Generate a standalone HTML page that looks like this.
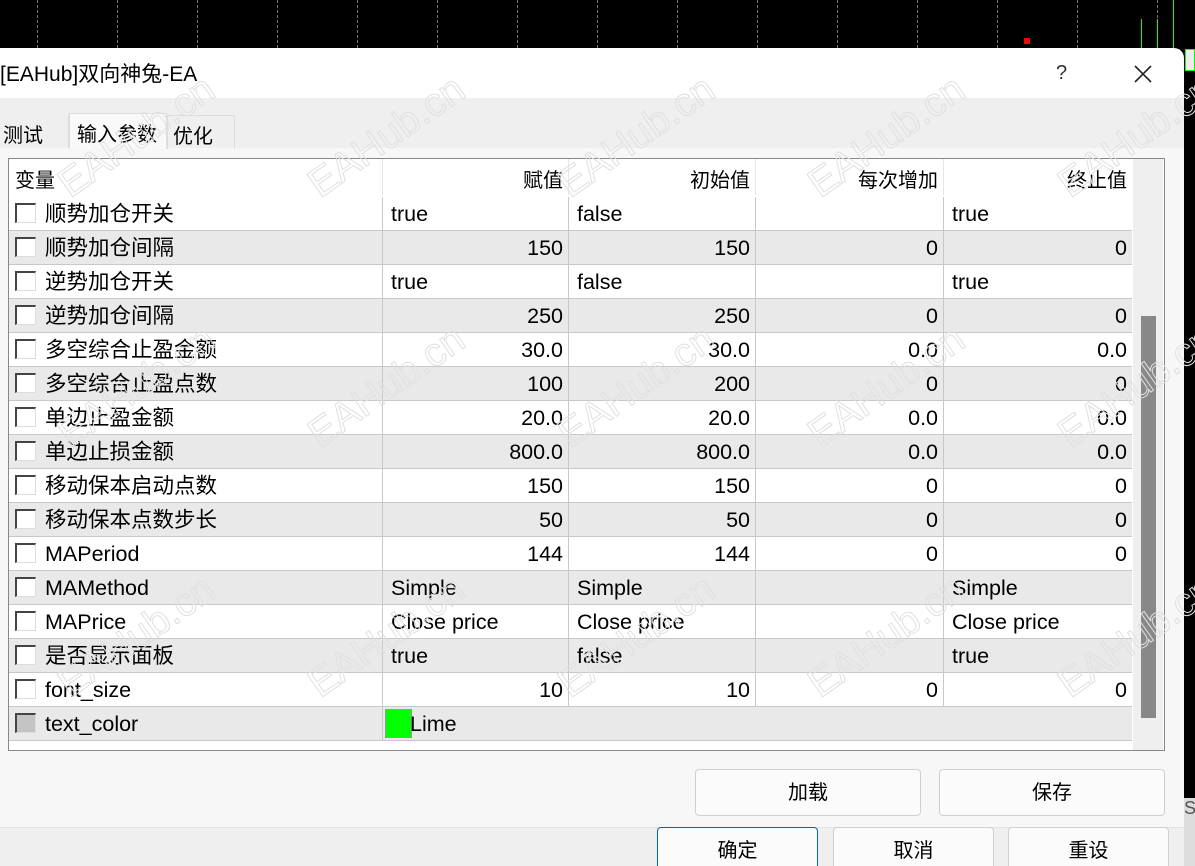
<!DOCTYPE html>
<html><head><meta charset="utf-8"><style>
*{margin:0;padding:0;box-sizing:border-box}
body{width:1195px;height:866px;overflow:hidden;background:#000;position:relative;font-family:"Liberation Sans","Noto Sans CJK SC",sans-serif;color:#000}
.a{position:absolute}
.dlg{left:0;top:48px;width:1184px;height:818px;background:#fff;border-top-right-radius:10px;overflow:hidden}
.row{position:absolute;left:10px;width:1123px;height:34px;border-bottom:1px solid #c8c8c8;font-size:21.5px}
.row.g{background:#e9e9e9}.row.w{background:#fff}
.c{position:absolute;top:0;height:33px;line-height:35px;white-space:nowrap;border-left:1px solid #c8c8c8}
.c1{left:373px;width:186px}.c2{left:559px;width:187px}.c3{left:746px;width:188px}.c4{left:934px;width:189px}
.l{padding-left:8px}.r{text-align:right;padding-right:5px}
.nm{position:absolute;left:36px;top:0;line-height:35px}
.cb{position:absolute;left:6px;top:6px;width:21px;height:20px;background:#fff;border-top:2px solid #444;border-left:2px solid #444;border-right:1px solid #ddd;border-bottom:1px solid #ddd}
.btn{position:absolute;background:#fbfbfb;border:1px solid #d0d0d0;border-radius:4px;font-size:20px;text-align:center}
.wm{position:absolute;color:transparent;-webkit-text-stroke:1px #e0e0e0;font-size:40px;transform:rotate(-35deg);transform-origin:left top;white-space:nowrap;font-family:"Liberation Sans",sans-serif}
</style></head><body>
<div class="a" style="left:37px;top:0;height:48px;border-left:1px dashed #777"></div>
<div class="a" style="left:117px;top:0;height:48px;border-left:1px dashed #777"></div>
<div class="a" style="left:197px;top:0;height:48px;border-left:1px dashed #777"></div>
<div class="a" style="left:277px;top:0;height:48px;border-left:1px dashed #777"></div>
<div class="a" style="left:357px;top:0;height:48px;border-left:1px dashed #777"></div>
<div class="a" style="left:437px;top:0;height:48px;border-left:1px dashed #777"></div>
<div class="a" style="left:517px;top:0;height:48px;border-left:1px dashed #777"></div>
<div class="a" style="left:597px;top:0;height:48px;border-left:1px dashed #777"></div>
<div class="a" style="left:677px;top:0;height:48px;border-left:1px dashed #777"></div>
<div class="a" style="left:757px;top:0;height:48px;border-left:1px dashed #777"></div>
<div class="a" style="left:837px;top:0;height:48px;border-left:1px dashed #777"></div>
<div class="a" style="left:917px;top:0;height:48px;border-left:1px dashed #777"></div>
<div class="a" style="left:997px;top:0;height:48px;border-left:1px dashed #777"></div>
<div class="a" style="left:1077px;top:0;height:48px;border-left:1px dashed #777"></div>
<div class="a" style="left:1157px;top:0;height:48px;border-left:1px dashed #777"></div>
<div class="a" style="left:1024px;top:38px;width:6px;height:6px;background:#f00"></div>
<div class="a" style="left:1141px;top:19px;width:1px;height:30px;background:#0f0"></div>
<div class="a" style="left:1157px;top:19px;width:1px;height:30px;background:#0f0"></div>
<div class="a" style="left:1173px;top:0;width:1px;height:49px;background:#0f0"></div>
<div class="a" style="left:1185px;top:49px;width:10px;height:22px;border:1px solid #0f0;background:#eee"></div>
<div class="a" style="left:1184px;top:798px;width:11px;height:68px;background:#dcdcdc;font-size:18px;color:#555">S</div>

<div class="a dlg">
  <div class="a" style="left:0;top:10px;font-size:21px">[EAHub]双向神兔-EA</div>
  <div class="a" style="left:1056px;top:14px;font-size:20px;color:#333">?</div>
  <svg class="a" style="left:1133px;top:16px" width="20" height="20"><path d="M2 2L18 18M18 2L2 18" stroke="#222" stroke-width="1.6"/></svg>
  <div class="a" style="left:0;top:50px;width:1184px;height:768px;background:#efefef"></div>
  <div class="a" style="left:0;top:100px;width:1184px;height:680px;background:#f7f7f7"></div>
  <div class="a" style="left:-1px;top:66px;width:70px;height:34px;font-size:20px;padding:5px 0 0 4px;border-right:1px solid #ddd">测试</div>
  <div class="a" style="left:69px;top:65px;width:98px;height:36px;background:#f9f9f9;border:1px solid #ddd;border-bottom:none;font-size:20px;padding:4px 0 0 7px">输入参数</div>
  <div class="a" style="left:167px;top:67px;width:68px;height:34px;border:1px solid #ddd;border-bottom:none;font-size:20px;padding:4px 0 0 5px">优化</div>

  <div class="a" style="left:8px;top:110px;width:1157px;height:593px;background:#fff;border:1px solid #888"></div>
  <div class="a" style="left:1133px;top:111px;width:30px;height:591px;background:#efefef"></div>
  <div class="a" style="left:1141px;top:268px;width:15px;height:402px;background:#888"></div>
  <div class="a" style="left:9px;top:111px;width:1124px;height:38px;font-size:20px">
    <div class="a" style="left:6px;top:5px">变量</div>
    <div class="a" style="left:373px;top:0;width:1px;height:36px;background:#e6e6e6"></div>
    <div class="a" style="left:559px;top:0;width:1px;height:36px;background:#e6e6e6"></div>
    <div class="a" style="left:746px;top:0;width:1px;height:36px;background:#e6e6e6"></div>
    <div class="a" style="left:934px;top:0;width:1px;height:36px;background:#e6e6e6"></div>
    <div class="a" style="left:373px;top:5px;width:186px;text-align:right;padding-right:5px">赋值</div>
    <div class="a" style="left:559px;top:5px;width:187px;text-align:right;padding-right:5px">初始值</div>
    <div class="a" style="left:746px;top:5px;width:188px;text-align:right;padding-right:5px">每次增加</div>
    <div class="a" style="left:934px;top:5px;width:189px;text-align:right;padding-right:5px">终止值</div>
  </div>
  <div style="position:absolute;left:-1px;top:149px">
  <div class="row w" style="top:0"><div class="cb"></div><div class="nm">顺势加仓开关</div><div class="c c1 l">true</div><div class="c c2 l">false</div><div class="c c3"></div><div class="c c4 l">true</div></div>
  <div class="row g" style="top:34px"><div class="cb"></div><div class="nm">顺势加仓间隔</div><div class="c c1 r">150</div><div class="c c2 r">150</div><div class="c c3 r">0</div><div class="c c4 r">0</div></div>
  <div class="row w" style="top:68px"><div class="cb"></div><div class="nm">逆势加仓开关</div><div class="c c1 l">true</div><div class="c c2 l">false</div><div class="c c3"></div><div class="c c4 l">true</div></div>
  <div class="row g" style="top:102px"><div class="cb"></div><div class="nm">逆势加仓间隔</div><div class="c c1 r">250</div><div class="c c2 r">250</div><div class="c c3 r">0</div><div class="c c4 r">0</div></div>
  <div class="row w" style="top:136px"><div class="cb"></div><div class="nm">多空综合止盈金额</div><div class="c c1 r">30.0</div><div class="c c2 r">30.0</div><div class="c c3 r">0.0</div><div class="c c4 r">0.0</div></div>
  <div class="row g" style="top:170px"><div class="cb"></div><div class="nm">多空综合止盈点数</div><div class="c c1 r">100</div><div class="c c2 r">200</div><div class="c c3 r">0</div><div class="c c4 r">0</div></div>
  <div class="row w" style="top:204px"><div class="cb"></div><div class="nm">单边止盈金额</div><div class="c c1 r">20.0</div><div class="c c2 r">20.0</div><div class="c c3 r">0.0</div><div class="c c4 r">0.0</div></div>
  <div class="row g" style="top:238px"><div class="cb"></div><div class="nm">单边止损金额</div><div class="c c1 r">800.0</div><div class="c c2 r">800.0</div><div class="c c3 r">0.0</div><div class="c c4 r">0.0</div></div>
  <div class="row w" style="top:272px"><div class="cb"></div><div class="nm">移动保本启动点数</div><div class="c c1 r">150</div><div class="c c2 r">150</div><div class="c c3 r">0</div><div class="c c4 r">0</div></div>
  <div class="row g" style="top:306px"><div class="cb"></div><div class="nm">移动保本点数步长</div><div class="c c1 r">50</div><div class="c c2 r">50</div><div class="c c3 r">0</div><div class="c c4 r">0</div></div>
  <div class="row w" style="top:340px"><div class="cb"></div><div class="nm">MAPeriod</div><div class="c c1 r">144</div><div class="c c2 r">144</div><div class="c c3 r">0</div><div class="c c4 r">0</div></div>
  <div class="row g" style="top:374px"><div class="cb"></div><div class="nm">MAMethod</div><div class="c c1 l">Simple</div><div class="c c2 l">Simple</div><div class="c c3"></div><div class="c c4 l">Simple</div></div>
  <div class="row w" style="top:408px"><div class="cb"></div><div class="nm">MAPrice</div><div class="c c1 l">Close price</div><div class="c c2 l">Close price</div><div class="c c3"></div><div class="c c4 l">Close price</div></div>
  <div class="row g" style="top:442px"><div class="cb"></div><div class="nm">是否显示面板</div><div class="c c1 l">true</div><div class="c c2 l">false</div><div class="c c3"></div><div class="c c4 l">true</div></div>
  <div class="row w" style="top:476px"><div class="cb"></div><div class="nm">font_size</div><div class="c c1 r">10</div><div class="c c2 r">10</div><div class="c c3 r">0</div><div class="c c4 r">0</div></div>
  <div class="row g" style="top:510px"><div class="cb" style="background:#c4c4c4"></div><div class="nm">text_color</div><div class="c c1" style="width:750px"><span style="position:absolute;left:2px;top:2px;width:27px;height:29px;background:#0f0;border:1px solid #999"></span><span style="position:absolute;left:27px">Lime</span></div></div>
  </div>

  <div class="btn" style="left:695px;top:721px;width:226px;height:47px;line-height:47px">加载</div>
  <div class="btn" style="left:939px;top:721px;width:226px;height:47px;line-height:47px">保存</div>
  <div class="a" style="left:0;top:779px;width:1184px;height:1px;background:#e2e2e2"></div>
  <div class="btn" style="left:657px;top:779px;width:161px;height:50px;line-height:47px;border-color:#0067c0">确定</div>
  <div class="btn" style="left:833px;top:779px;width:161px;height:50px;line-height:47px">取消</div>
  <div class="btn" style="left:1008px;top:779px;width:161px;height:50px;line-height:47px">重设</div>
</div>
<div class="wm" style="left:50px;top:170px">EAHub.cn</div>
<div class="wm" style="left:300px;top:170px">EAHub.cn</div>
<div class="wm" style="left:550px;top:170px">EAHub.cn</div>
<div class="wm" style="left:800px;top:170px">EAHub.cn</div>
<div class="wm" style="left:1050px;top:170px">EAHub.cn</div>
<div class="wm" style="left:50px;top:420px">EAHub.cn</div>
<div class="wm" style="left:300px;top:420px">EAHub.cn</div>
<div class="wm" style="left:550px;top:420px">EAHub.cn</div>
<div class="wm" style="left:800px;top:420px">EAHub.cn</div>
<div class="wm" style="left:1050px;top:420px">EAHub.cn</div>
<div class="wm" style="left:50px;top:670px">EAHub.cn</div>
<div class="wm" style="left:300px;top:670px">EAHub.cn</div>
<div class="wm" style="left:550px;top:670px">EAHub.cn</div>
<div class="wm" style="left:800px;top:670px">EAHub.cn</div>
<div class="wm" style="left:1050px;top:670px">EAHub.cn</div>
</body></html>
